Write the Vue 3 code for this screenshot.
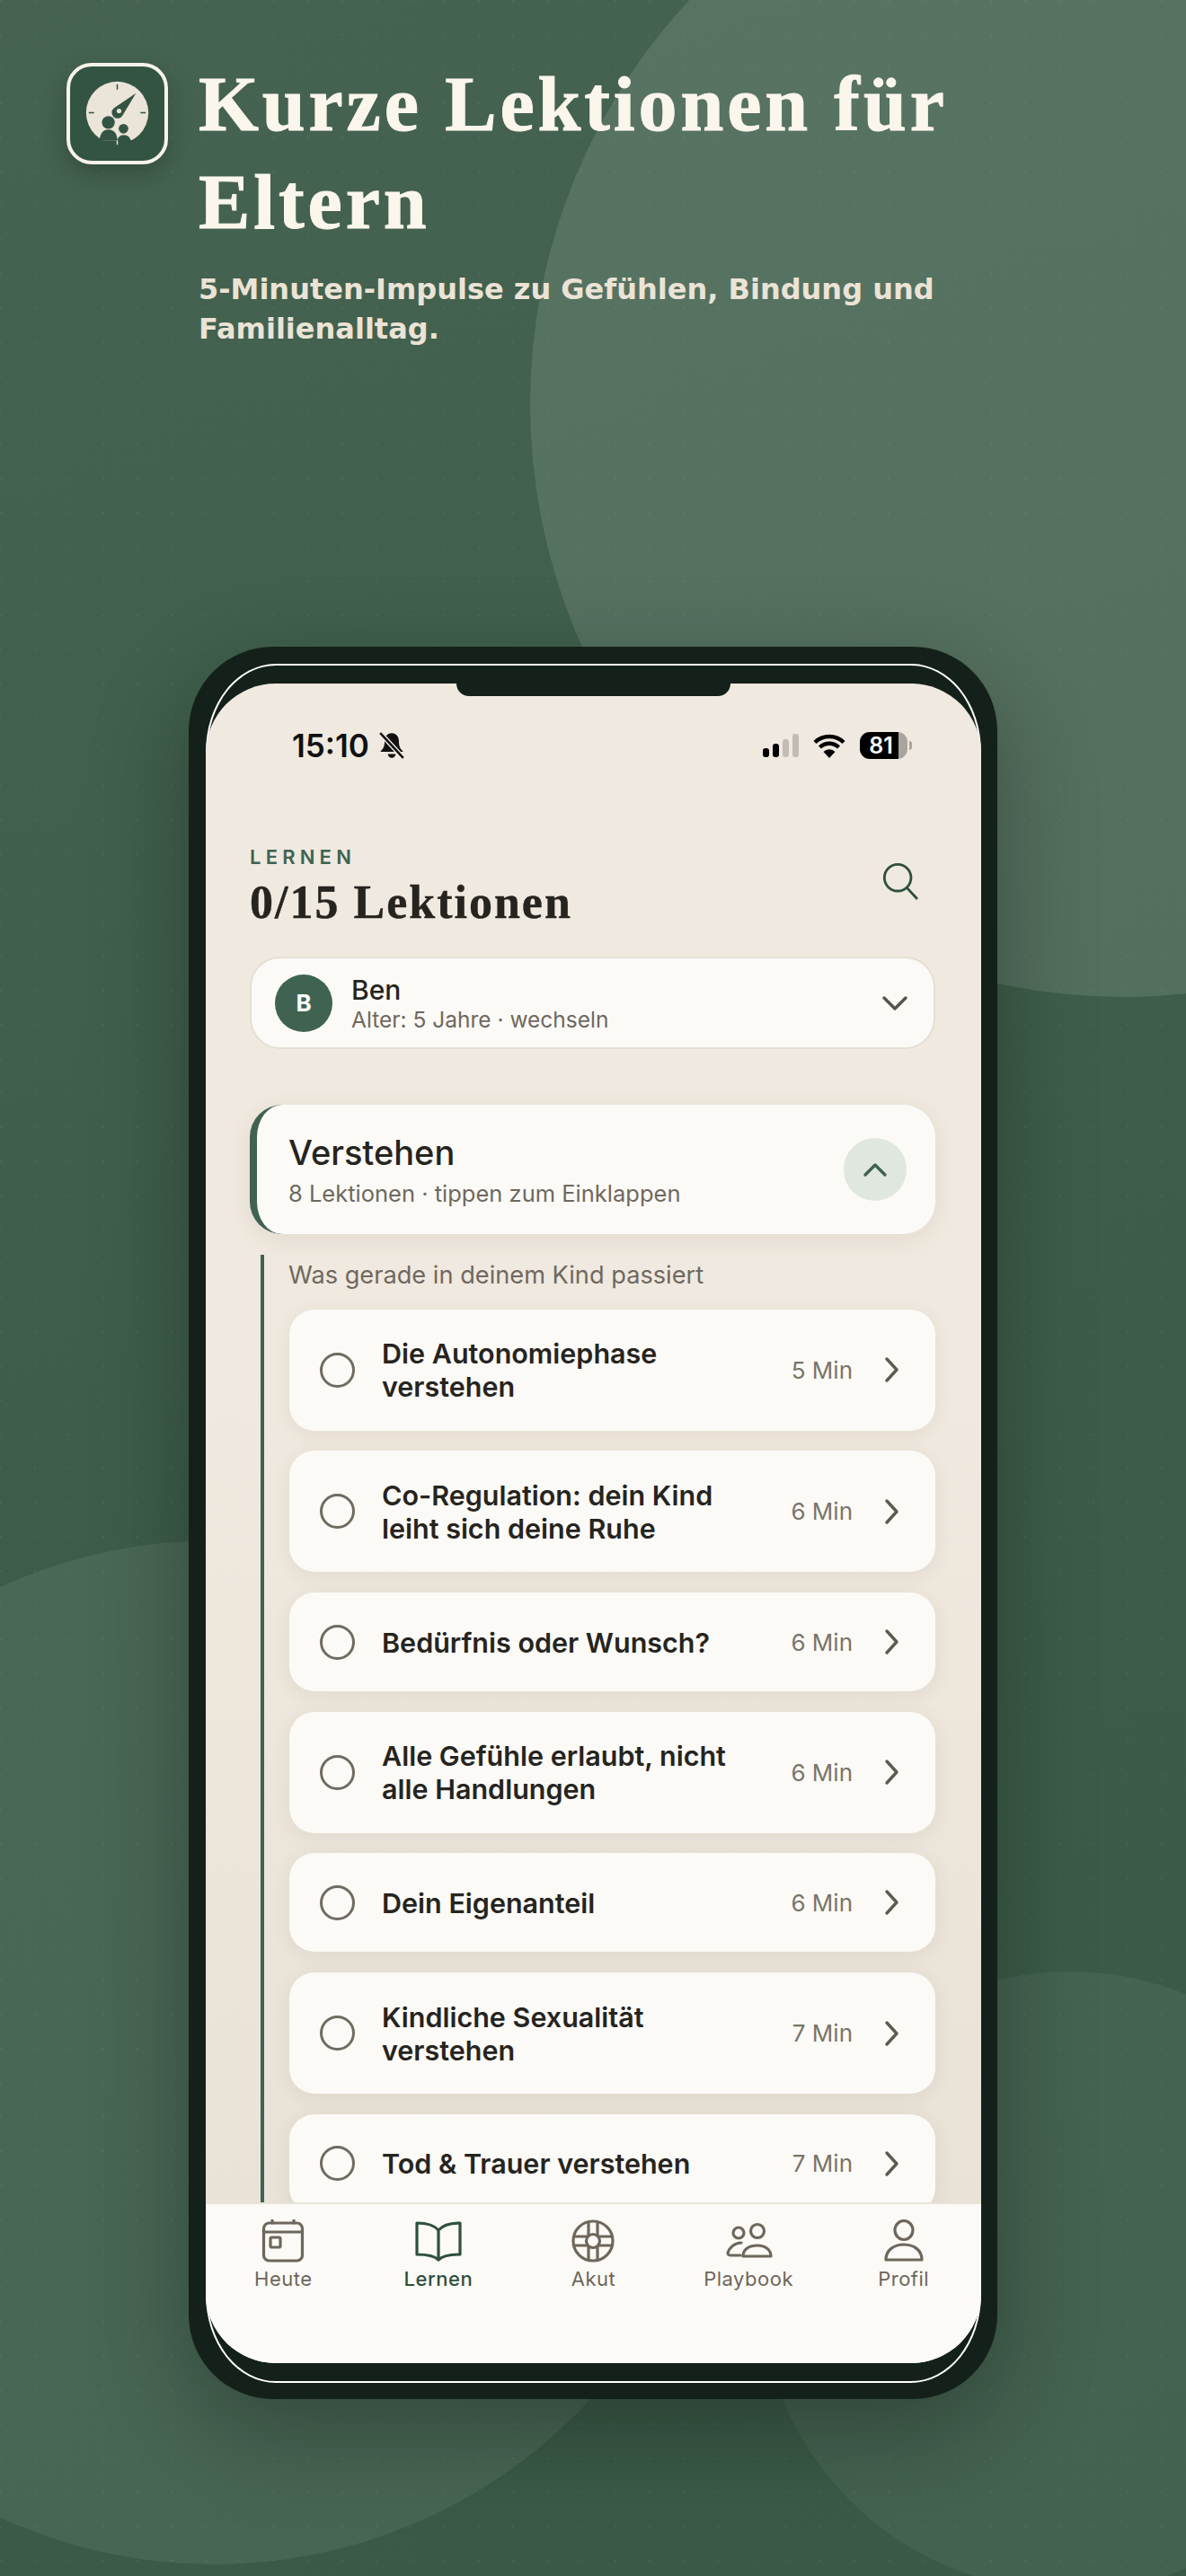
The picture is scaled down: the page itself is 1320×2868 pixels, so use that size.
<script setup>
const lessons = [
  { title: 'Die Autonomiephase verstehen', min: 5, two: true },
  { title: 'Co-Regulation: dein Kind leiht sich deine Ruhe', min: 6, two: true },
  { title: 'Bedürfnis oder Wunsch?', min: 6 },
  { title: 'Alle Gefühle erlaubt, nicht alle Handlungen', min: 6, two: true },
  { title: 'Dein Eigenanteil', min: 6 },
  { title: 'Kindliche Sexualität verstehen', min: 7, two: true },
  { title: 'Tod & Trauer verstehen', min: 7 }
]

const tabs = [
  { name: 'Heute', icon: 'cal' },
  { name: 'Lernen', icon: 'book', active: true },
  { name: 'Akut', icon: 'buoy' },
  { name: 'Playbook', icon: 'people' },
  { name: 'Profil', icon: 'person' }
]
</script>

<template>
  <div class="page">
    <i class="blob blob-top"></i>
    <i class="blob blob-left"></i>
    <i class="blob blob-right"></i>

    <header class="hero">
      <div class="logo">
        <svg viewBox="17 13 106 106" width="105" height="105">
          <circle cx="70" cy="65" r="35" fill="#ebe4d9" />
          <path d="M70 33v6M38 65h6M96 65h6" stroke="#345443" stroke-width="1.6" />
          <path d="M91 43 76 68a6.5 6.5 0 1 1-10-8z" fill="#345443" />
          <circle cx="72" cy="63" r="2.6" fill="#ebe4d9" />
          <path d="M45 96h50v10H45z" fill="#345443" />
          <circle cx="60" cy="76" r="7.2" fill="#345443" />
          <circle cx="77" cy="83" r="5.4" fill="#345443" />
          <path d="M50 96c1-9 5-12 10-12 6 0 10 4 10 12z" fill="#345443" />
          <path d="M69 99c1-6 4-9 8-9 5 0 8 3 8.500 8z" fill="#345443" />
          <path d="M70 96v5" stroke="#ebe4d9" stroke-width="1.4" />
        </svg>
      </div>
      <div class="hero-text">
        <h1>Kurze Lektionen für<br>Eltern</h1>
        <p>5-Minuten-Impulse zu Gefühlen, Bindung und Familienalltag.</p>
      </div>
    </header>

    <div class="phone">
      <div class="screen">
        <div class="notch"></div>

        <div class="status">
          <div class="status-left">
            <span class="clock">15:10</span>
            <svg width="32" height="32" viewBox="0 0 30 30">
              <path d="M15 2c-5 0-7.500 4-7.500 9 0 5-1.500 7.500-4.500 10.500h24c-3-3-4.500-5.500-4.500-10.500 0-5-2.500-9-7.500-9z" fill="#111" />
              <path d="M11 24h8a4 4 0 0 1-8 0z" fill="#111" />
              <path d="M3 2 27 28" stroke="#f0e9df" stroke-width="5" />
              <path d="M3 2 27 28" stroke="#111" stroke-width="2.400" />
            </svg>
          </div>
          <div class="status-right">
            <div class="signal">
              <i class="on h10"></i><i class="on h15"></i><i class="h20"></i><i class="h26"></i>
            </div>
            <svg width="36" height="27" viewBox="0 0 36 27">
              <path d="M2 9.500a23 23 0 0 1 32 0M7.500 15a15 15 0 0 1 21 0" fill="none" stroke="#000" stroke-width="4.400" />
              <path d="M18 27 11.500 20a9 9 0 0 1 13 0z" fill="#000" />
            </svg>
            <div class="battery"><span>81</span></div>
          </div>
        </div>

        <div class="scroll">
          <div class="top">
            <div>
              <div class="eyebrow">LERNEN</div>
              <h2>0/15 Lektionen</h2>
            </div>
            <svg class="search" width="42" height="42" viewBox="0 0 44 44" fill="none" stroke="#2f4f3f" stroke-width="3" stroke-linecap="round">
              <circle cx="19" cy="18" r="15.500" />
              <path d="m30 30 11 12" />
            </svg>
          </div>

          <div class="child">
            <div class="avatar">B</div>
            <div class="child-info">
              <div class="child-name">Ben</div>
              <div class="child-age">Alter: 5 Jahre · wechseln</div>
            </div>
            <svg width="30" height="18" viewBox="0 0 30 18" fill="none" stroke="#57514a" stroke-width="3.400" stroke-linecap="round" stroke-linejoin="round">
              <path d="m3 3 12 12L27 3" />
            </svg>
          </div>

          <div class="section-head">
            <div class="section-text">
              <div class="section-title">Verstehen</div>
              <div class="section-sub">8 Lektionen · tippen zum Einklappen</div>
            </div>
            <div class="collapse">
              <svg width="28" height="18" viewBox="0 0 28 18" fill="none" stroke="#3f6350" stroke-width="3.400" stroke-linecap="round" stroke-linejoin="round">
                <path d="m3 15 11-11 11 11" />
              </svg>
            </div>
          </div>

          <div class="rail">
            <div class="caption">Was gerade in deinem Kind passiert</div>
            <div v-for="l in lessons" :key="l.title" class="lesson" :class="{ two: l.two }">
              <span class="radio"></span>
              <span class="lesson-title">{{ l.title }}</span>
              <span class="lesson-min">{{ l.min }} Min</span>
              <svg width="18" height="30" viewBox="0 0 18 30" fill="none" stroke="#5f594f" stroke-width="3.400" stroke-linecap="round" stroke-linejoin="round">
                <path d="m4 3 11 12L4 27" />
              </svg>
            </div>
          </div>
        </div>

        <nav class="tabs">
          <div v-for="t in tabs" :key="t.name" class="tab" :class="{ active: t.active }">
            <svg width="54" height="48" viewBox="0 0 54 48" fill="none" stroke="currentColor" stroke-width="3.200" stroke-linecap="round" stroke-linejoin="round">
              <template v-if="t.icon === 'cal'">
                <rect x="5.500" y="4" width="43" height="42" rx="6" />
                <path d="M5.500 14h43M15 1v3M39 1v3" />
                <rect x="13" y="20" width="11" height="11" rx="1.500" />
              </template>
              <template v-else-if="t.icon === 'book'">
                <path d="M27 12C22 6 12 4 3 4v35c9 0 19 1 24 6 5-5 15-6 24-6V4c-9 0-19 2-24 8zM27 12v33" />
              </template>
              <template v-else-if="t.icon === 'buoy'">
                <circle cx="27" cy="24" r="22" />
                <circle cx="27" cy="24" r="7.500" />
                <path d="M22 3v15M32 3v15M22 30v15M32 30v15M6 19h15M33 19h15M6 29h15M33 29h15" />
              </template>
              <template v-else-if="t.icon === 'people'">
                <circle cx="37" cy="13" r="7.500" />
                <circle cx="16" cy="15" r="6" />
                <path d="M21 41c0-8 7-12 16-12s15 5 15 12z" />
                <path d="M19 26c-7 0-13 5-15 11 0 3 2 3 4 3h10" />
              </template>
              <template v-else>
                <ellipse cx="27" cy="12" rx="10" ry="10.500" />
                <path d="M7 45c0-11 9-17 20-17s20 6 20 17z" />
              </template>
            </svg>
            <span>{{ t.name }}</span>
          </div>
        </nav>
      </div>
    </div>
  </div>
</template>

<style>
body { margin: 0; }
</style>

<style scoped>
.page {
  position: relative;
  width: 1320px;
  height: 2868px;
  overflow: hidden;
  background-color: #3d5c4a;
  background-image:
    radial-gradient(circle at 1px 1px, rgba(255, 255, 255, .05) 1px, transparent 1.5px),
    linear-gradient(160deg, #456350 0%, #3d5d4a 55%, #3a5a47 100%);
  background-size: 38px 38px, 100% 100%;
  font-family: Inter, "Noto Sans", sans-serif;
}

.blob {
  position: absolute;
  border-radius: 50%;
}
.blob-top { left: 590px; top: -210px; width: 1320px; height: 1320px; background: rgba(255, 255, 255, .11); }
.blob-left { left: -332px; top: 1715px; width: 1140px; height: 1140px; background: rgba(255, 255, 255, .07); }
.blob-right { left: 845px; top: 2195px; width: 690px; height: 690px; background: rgba(255, 255, 255, .05); }

.hero {
  position: relative;
  display: flex;
  align-items: flex-start;
  gap: 34px;
  height: 720px;
  padding: 70px 0 0 74px;
  box-sizing: border-box;
}

.logo {
  display: flex;
  align-items: center;
  justify-content: center;
  flex: none;
  width: 113px;
  height: 113px;
  box-sizing: border-box;
  border: 4px solid #f8f3ea;
  border-radius: 28px;
  background: #345443;
  box-shadow: 0 10px 26px rgba(0, 0, 0, .22);
}

.hero-text { width: 860px; margin-top: -8px; }

h1 {
  margin: 0;
  font-family: "Liberation Serif", serif;
  font-weight: 700;
  font-size: 86px;
  line-height: 109px;
  letter-spacing: 3.900px;
  color: #fbf6ec;
  -webkit-text-stroke: 1px #fbf6ec;
}

.hero-text p {
  margin: 20px 0 0;
  font-family: "DejaVu Sans", sans-serif;
  font-weight: 700;
  font-size: 32px;
  line-height: 44px;
  color: #ebe3d6;
}

.phone {
  position: relative;
  width: 900px;
  height: 1951px;
  margin: 0 auto;
  padding: 41px 18px 0 19px;
  box-sizing: border-box;
  border-radius: 94px;
  background: #14211a;
  box-shadow: 0 36px 110px rgba(0, 0, 0, .3);
}
.phone::before {
  content: "";
  position: absolute;
  left: 19px;
  right: 18px;
  top: 19px;
  bottom: 18px;
  border: 2px solid #fff;
  border-radius: 78px / 98px;
}

.screen {
  position: relative;
  display: flex;
  flex-direction: column;
  height: 1870px;
  overflow: hidden;
  border-radius: 78px;
  background: #f0e9df;
}

.notch {
  position: absolute;
  left: 279px;
  top: 0;
  width: 305px;
  height: 14px;
  border-radius: 0 0 14px 14px;
  background: #14211a;
}

.status {
  flex: none;
  display: flex;
  align-items: center;
  justify-content: space-between;
  height: 138px;
  padding: 0 82px 0 96px;
  color: #111;
}
.status-left { display: flex; align-items: center; gap: 9px; }
.clock { font-size: 35px; font-weight: 600; }
.status-right { display: flex; align-items: center; gap: 16px; }

.signal { display: flex; align-items: flex-end; gap: 4px; height: 26px; }
.signal i { display: block; width: 7px; border-radius: 3px; background: #c2bcb2; }
.signal i.on { background: #000; }
.h10 { height: 10px; }
.h15 { height: 15px; }
.h20 { height: 20px; }
.h26 { height: 26px; }

.battery {
  position: relative;
  width: 53px;
  height: 30px;
  border-radius: 11px;
  background: linear-gradient(90deg, #000 81%, #a9a59d 81%);
  color: #fff;
  font-size: 25px;
  font-weight: 600;
  line-height: 30px;
  text-align: center;
}
.battery span { position: relative; left: -3px; }
.battery::after {
  content: "";
  position: absolute;
  left: 55px;
  top: 10px;
  width: 3px;
  height: 10px;
  border-radius: 0 3px 3px 0;
  background: #a9a59d;
}

.scroll {
  flex: 1;
  min-height: 0;
  overflow: hidden;
  padding: 42px 51px 0 49px;
  background: linear-gradient(#f0e9df 40%, #e9e2d7);
}

.top {
  display: flex;
  align-items: flex-start;
  justify-content: space-between;
  padding-right: 18px;
}
.eyebrow {
  font-size: 22px;
  line-height: 26px;
  font-weight: 600;
  letter-spacing: 5.200px;
  color: #3f6350;
}
h2 {
  margin: 9px 0 0;
  font-family: "Liberation Serif", serif;
  font-weight: 700;
  font-size: 52px;
  line-height: 58px;
  letter-spacing: 2px;
  color: #26241f;
  -webkit-text-stroke: .4px #26241f;
}
.search { margin-top: 19px; }

.child {
  display: flex;
  align-items: center;
  gap: 21px;
  height: 103px;
  margin-top: 31px;
  padding: 0 28px 0 26px;
  box-sizing: border-box;
  border: 2px solid #e5dfd3;
  border-radius: 34px;
  background: #fbfaf6;
}
.avatar {
  display: flex;
  align-items: center;
  justify-content: center;
  flex: none;
  width: 64px;
  height: 64px;
  border-radius: 50%;
  background: #3f6350;
  color: #fff;
  font-size: 26px;
  font-weight: 700;
}
.child-info { flex: 1; }
.child-name { font-size: 30px; line-height: 36px; font-weight: 500; color: #26241f; }
.child-age { font-size: 24.500px; line-height: 30px; color: #6f685e; }

.section-head {
  display: flex;
  align-items: center;
  justify-content: space-between;
  height: 144px;
  margin-top: 62px;
  padding: 0 32px 0 35px;
  box-sizing: border-box;
  border-left: 8px solid #3f6350;
  border-radius: 36px;
  background: #fbfaf6;
  box-shadow: 0 6px 26px rgba(90, 70, 40, .09);
}
.section-title { font-size: 38px; line-height: 48px; font-weight: 500; color: #26241f; }
.section-sub { margin-top: 6px; font-size: 25.500px; line-height: 32px; color: #6f685e; }
.collapse {
  display: flex;
  align-items: center;
  justify-content: center;
  width: 70px;
  height: 70px;
  border-radius: 50%;
  background: #dfe7df;
}

.rail {
  display: flex;
  flex-direction: column;
  gap: 22.700px;
  margin: 23px 0 0 12px;
  padding-left: 28px;
  border-left: 4px solid #3f6350;
}
.caption {
  margin: 5px 0 -3px -1px;
  font-size: 27.200px;
  line-height: 36px;
  color: #6f685e;
}

.lesson {
  flex: none;
  display: flex;
  align-items: center;
  height: 110px;
  padding: 0 40px 0 34px;
  box-sizing: border-box;
  border-radius: 28px;
  background: #fbfaf6;
  box-shadow: 0 4px 22px rgba(90, 70, 40, .08);
}
.lesson.two { height: 135px; }
.radio {
  flex: none;
  width: 39px;
  height: 39px;
  box-sizing: border-box;
  border: 3px solid #716a60;
  border-radius: 50%;
}
.lesson-title {
  flex: 1;
  padding: 0 60px 0 30px;
  font-size: 30.500px;
  line-height: 37px;
  font-weight: 600;
  color: #26241f;
}
.lesson-min {
  flex: none;
  margin-right: 34px;
  font-size: 26px;
  color: #7a7368;
  white-space: nowrap;
}

.tabs {
  flex: none;
  display: grid;
  grid-template-columns: repeat(5, 1fr);
  height: 179px;
  padding-top: 17px;
  box-sizing: border-box;
  border-top: 2px solid #e8e3d9;
  background: #fbfaf6;
}
.tab {
  display: flex;
  flex-direction: column;
  align-items: center;
  gap: 4px;
  color: #6e665b;
  font-size: 22px;
  line-height: 28px;
  font-weight: 400;
  letter-spacing: .5px;
}
.tab.active { color: #2f4f3f; font-weight: 500; }
</style>
